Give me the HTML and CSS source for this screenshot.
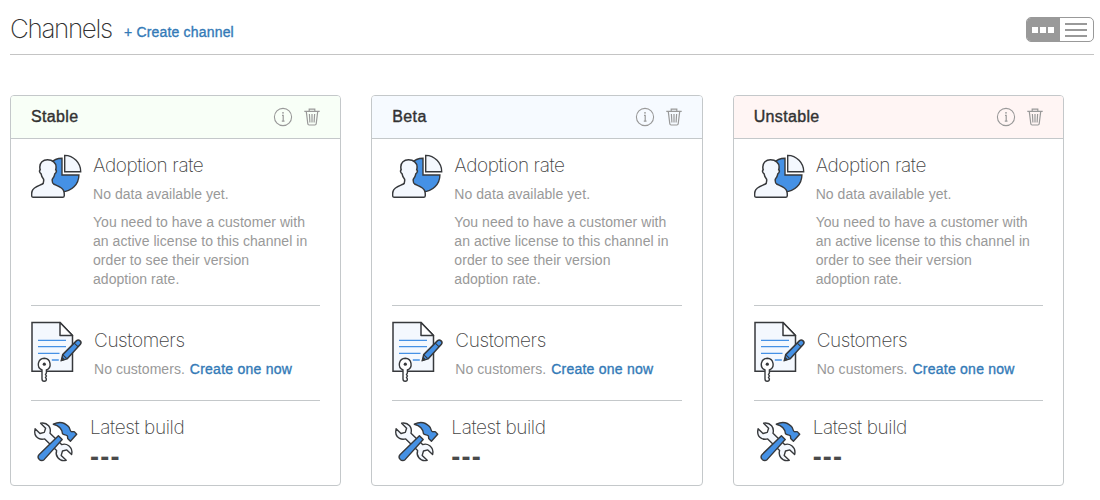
FILE: index.html
```
<!DOCTYPE html>
<html lang="en">
<head>
<meta charset="utf-8">
<title>Channels</title>
<link rel="stylesheet" href="styles.css">
</head>
<body>
<svg class="sprite" aria-hidden="true">
  <symbol id="i-info" viewBox="0 0 20 20">
    <circle cx="10" cy="10" r="8.6" fill="none" stroke="#999" stroke-width="1.1"/>
    <path d="M9 8.300h1.200v5.900M8.800 14.200h2.700" fill="none" stroke="#999" stroke-width="1.200"/>
    <circle cx="10" cy="5.800" r=".9" fill="#999"/>
  </symbol>
  <symbol id="i-trash" viewBox="0 0 16 18">
    <path d="M.3 3.400h15.400M5.200 3.200V1.200h5.600v2M2.300 3.600l1.500 12.200q.1 1.200 1.300 1.200h5.800q1.200 0 1.300-1.200L13.700 3.600M5.400 6l.5 8.500M8 6v8.500M10.600 6l-.5 8.500" fill="none" stroke="#999" stroke-width="1.200"/>
  </symbol>
  <symbol id="i-adoption" viewBox="0 0 52 46">
    <path d="M31 4.200A16.800 16.800 0 1 0 47.900 21H31z" fill="#4591e5" stroke="#37393c" stroke-width="1.400"/>
    <path d="M33.700 1.400v16.300h16A16.200 16.200 0 0 0 33.700 1.400z" fill="#f4f8fe" stroke="#37393c" stroke-width="1.400"/>
    <path d="M16.500 5.800c-4.600 0-7.700 3-7.700 7.200 0 1.100.2 2 .4 2.800-1.200.5-.7 3.100.8 3.900.4 2.300 1.300 4.200 2.600 5.500.3 2.600.1 4.300-1.600 5.100C7.500 31.900 1.900 33.300 1 37.500c-.4 1.700-.5 3.200-.3 4.500.1.8.6 1.200 1.400 1.200h29.700c.8 0 1.300-.4 1.400-1.200.2-1.300.1-2.800-.3-4.500-.9-4.200-6.500-5.600-10-7.200-1.700-.8-1.900-2.500-1.600-5.100 1.300-1.300 2.200-3.200 2.600-5.500 1.500-.8 2-3.400.8-3.900.2-.8.4-1.700.4-2.800 0-4.200-3.500-7.200-8.600-7.200z" fill="#f4f8fe" stroke="#37393c" stroke-width="1.500"/>
  </symbol>
  <symbol id="i-license" viewBox="0 0 53 62">
    <path d="M1 1.500h28L41.500 14.600V50.300H1z" fill="#f4f8fe" stroke="#37393c" stroke-width="1.500"/>
    <path d="M29 1.500v13.100h12.500z" fill="#fff" stroke="#37393c" stroke-width="1.500" stroke-linejoin="round"/>
    <path d="M7 19.400h28M7 25.600h28M7 32.400h21.500M20.800 39h7" stroke="#4591e5" stroke-width="1.400"/>
    <path d="M13.300 37.300a6.100 6.100 0 0 0-2.300 11.700v9q0 2.200 2.200 2.200t2.200-2.200l-.9-1.500.9-1.500-.9-1.500.9-1.500V49a6.100 6.100 0 0 0-2.100-11.700z" fill="#fff" stroke="#37393c" stroke-width="1.400"/>
    <circle cx="13.300" cy="43.200" r="1.600" fill="#37393c"/>
    <path d="M30.300 39.600l1.400-6L45.600 19.600q1.700-1.400 3.500.3 1.700 1.700.3 3.400L36 37.900z" fill="#4591e5" stroke="#37393c" stroke-width="1.500" stroke-linejoin="round"/>
    <path d="M43.200 22.100l4 3.800M31.900 33.800l3.900 3.900M30.300 39.600l1.100-3 1.800 1.900z" fill="#37393c" stroke="#37393c" stroke-width="1.100"/>
  </symbol>
  <symbol id="i-build" viewBox="0 0 48 44">
    <path d="M9.600 4.200l5 5-1.300 4.200-4.300 1.100-4.900-4.700c-1.100 4.600.4 8 3.400 9.600 2 1.100 4.200 1.100 6.200.5l11.900 11.700c-.8 2.500-.4 5 1.300 7.200 2 2.500 5 3.300 8.300 2.500l-5-4.900 1.300-4.400 4.300-1.100 4.800 4.700c.9-3.600-.1-6.800-2.800-8.900-2.200-1.600-4.700-2-7.200-1.100L19 14.200c.7-2.600.4-5.200-1.400-7.400-1.900-2.300-4.700-3.300-8-2.600z" fill="#f4f8fe" stroke="#37393c" stroke-width="1.400" stroke-linejoin="round"/>
    <path d="M22.300 5.200c5.500-2.700 11.200-1.800 15.200 2.400 1.600 1.600 1.300 4 2.600 4.900 1 .7 2.300-.4 3.400.4l2.200 2.400-6.300 7-2.500-2.500c-.8-1 .2-2.100-.7-3-1.300-1.200-3.200-.7-4.700-2.100-.4-4.700-4-8.200-9.200-9.500z" fill="#4591e5" stroke="#37393c" stroke-width="1.400" stroke-linejoin="round"/>
    <path d="M27.400 16.800l3.800 3.700L13.300 40.400q-2.600 2.300-5.100 0-2.300-2.500 0-5z" fill="#4591e5" stroke="#37393c" stroke-width="1.400" stroke-linejoin="round"/>
  </symbol>
</svg>

<header class="topbar">
  <h1 class="title">Channels</h1>
  <a class="link create">+ Create channel</a>
  <div class="toggle">
    <span class="toggle-cards"><i></i><i></i><i></i></span>
    <span class="toggle-list"><i></i><i></i><i></i></span>
  </div>
</header>

<main class="cards">
  <article class="card">
    <div class="card-head green">
      <h2 class="name">Stable</h2>
      <svg class="info"><use href="#i-info"/></svg>
      <svg class="trash"><use href="#i-trash"/></svg>
    </div>
    <div class="card-body">
      <section class="row adoption">
        <svg class="icon"><use href="#i-adoption"/></svg>
        <div class="text">
          <h3 class="heading">Adoption rate</h3>
          <p class="note">No data available yet.</p>
          <p class="note long">You need to have a customer with<br>an active license to this channel in<br>order to see their version<br>adoption rate.</p>
        </div>
      </section>
      <section class="row customers">
        <svg class="icon"><use href="#i-license"/></svg>
        <div class="text">
          <h3 class="heading">Customers</h3>
          <p class="note">No customers. <a class="link">Create one now</a></p>
        </div>
      </section>
      <section class="row build">
        <svg class="icon"><use href="#i-build"/></svg>
        <div class="text">
          <h3 class="heading">Latest build</h3>
          <p class="version">---</p>
        </div>
      </section>
    </div>
  </article>
  <article class="card">
    <div class="card-head blue">
      <h2 class="name">Beta</h2>
      <svg class="info"><use href="#i-info"/></svg>
      <svg class="trash"><use href="#i-trash"/></svg>
    </div>
    <div class="card-body">
      <section class="row adoption">
        <svg class="icon"><use href="#i-adoption"/></svg>
        <div class="text">
          <h3 class="heading">Adoption rate</h3>
          <p class="note">No data available yet.</p>
          <p class="note long">You need to have a customer with<br>an active license to this channel in<br>order to see their version<br>adoption rate.</p>
        </div>
      </section>
      <section class="row customers">
        <svg class="icon"><use href="#i-license"/></svg>
        <div class="text">
          <h3 class="heading">Customers</h3>
          <p class="note">No customers. <a class="link">Create one now</a></p>
        </div>
      </section>
      <section class="row build">
        <svg class="icon"><use href="#i-build"/></svg>
        <div class="text">
          <h3 class="heading">Latest build</h3>
          <p class="version">---</p>
        </div>
      </section>
    </div>
  </article>
  <article class="card">
    <div class="card-head red">
      <h2 class="name">Unstable</h2>
      <svg class="info"><use href="#i-info"/></svg>
      <svg class="trash"><use href="#i-trash"/></svg>
    </div>
    <div class="card-body">
      <section class="row adoption">
        <svg class="icon"><use href="#i-adoption"/></svg>
        <div class="text">
          <h3 class="heading">Adoption rate</h3>
          <p class="note">No data available yet.</p>
          <p class="note long">You need to have a customer with<br>an active license to this channel in<br>order to see their version<br>adoption rate.</p>
        </div>
      </section>
      <section class="row customers">
        <svg class="icon"><use href="#i-license"/></svg>
        <div class="text">
          <h3 class="heading">Customers</h3>
          <p class="note">No customers. <a class="link">Create one now</a></p>
        </div>
      </section>
      <section class="row build">
        <svg class="icon"><use href="#i-build"/></svg>
        <div class="text">
          <h3 class="heading">Latest build</h3>
          <p class="version">---</p>
        </div>
      </section>
    </div>
  </article>
</main>
</body>
</html>
```
FILE: styles.css
```
* { box-sizing: border-box; }
body {
  margin: 0;
  padding: 0 6px 0 10px;
  height: 500px;
  overflow: hidden;
  background: #fff;
  font-family: "Liberation Sans", Arial, sans-serif;
}
h1, h2, h3, p { margin: 0; font-weight: 400; white-space: nowrap; }
svg { display: block; flex: none; }
.sprite { width: 0; height: 0; display: none; }

.topbar {
  display: flex;
  align-items: flex-start;
  height: 55px;
  border-bottom: 1px solid #c4c4c4;
}
.title {
  width: 114px;
  padding-top: 12px;
  font: 200 26px/34px Inter, sans-serif;
  letter-spacing: -1.35px;
  color: #323232;
}
.link { color: #337ab7; -webkit-text-stroke: 0.35px #337ab7; }
.create { padding-top: 22px; font-size: 14px; line-height: 20px; letter-spacing: 0.18px; }
.toggle {
  display: flex;
  margin: 17px 0 0 auto;
  width: 68px;
  height: 25px;
  border: 1px solid #999;
  border-radius: 5px;
  overflow: hidden;
}
.toggle-cards {
  display: flex;
  align-items: center;
  justify-content: center;
  gap: 2px;
  width: 33px;
  padding-right: 1px;
  background: #999;
}
.toggle-cards i { width: 6px; height: 6px; background: #fff; }
.toggle-list { flex: 1; display: flex; flex-direction: column; align-items: center; justify-content: center; gap: 4px; padding-right: 1px; }
.toggle-list i { width: 22px; height: 2px; background: #999; }

.cards { display: flex; gap: 30px; padding: 40px 30px 0 0; }
.card { flex: 1; height: 391px; border: 1px solid #c4c8ca; border-radius: 4px; overflow: hidden; }
.card-head { display: flex; align-items: center; height: 43px; padding: 0 20px; border-bottom: 1px solid #c4c8ca; }
.green { background: #f8fff7; }
.blue { background: #f6faff; }
.red { background: #fff5f4; }
.name { flex: 1; font-size: 16px; line-height: 20px; letter-spacing: 0.35px; color: #323232; -webkit-text-stroke: 0.4px #323232; }
.info { width: 20px; height: 20px; margin-right: 11px; }
.trash { width: 16px; height: 18px; }

.card-body { padding: 0 20px; }
.row { display: flex; border-bottom: 1px solid #c4c8ca; }
.heading { font: 200 19px/24px Inter, sans-serif; letter-spacing: -0.4px; color: #444; }
.note { font-size: 14px; line-height: 19px; letter-spacing: 0.05px; color: #999; }
.note .link { letter-spacing: 0.24px; margin-left: 1px; }

.adoption { height: 167px; padding-top: 15px; }
.adoption .icon { width: 52px; height: 46px; margin-right: 10px; }
.adoption .heading { margin-bottom: 7px; }
.long { margin-top: 9px; }

.customers { height: 95px; padding-top: 15px; }
.customers .icon { width: 53px; height: 62px; margin-right: 10px; }
.customers .text { padding-top: 8px; }
.customers .heading { margin-bottom: 7px; }

.build { border-bottom: 0; padding-top: 18px; }
.build .icon { width: 48px; height: 44px; margin-right: 11px; }
.build .text { margin-top: -3px; }
.version { padding-top: 2px; font-size: 27px; font-weight: 700; line-height: 30px; letter-spacing: 1.2px; color: #4a4a4a; }
```
